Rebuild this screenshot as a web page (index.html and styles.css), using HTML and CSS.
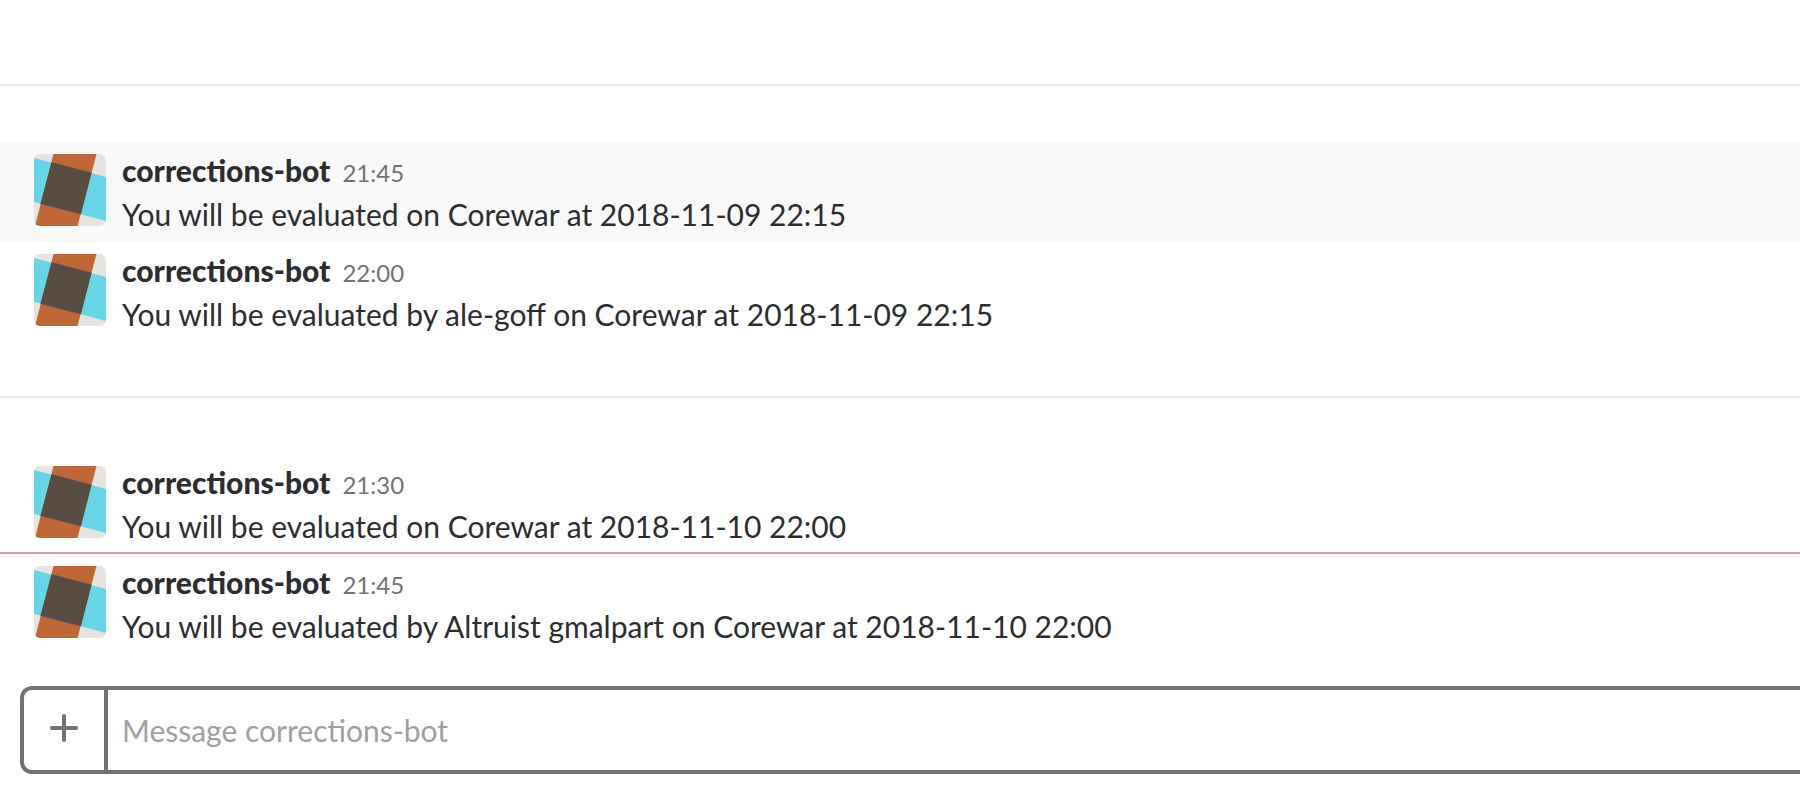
FILE: index.html
```html
<!DOCTYPE html>
<html lang="en">
<head>
<meta charset="utf-8">
<title>corrections-bot</title>
<link rel="stylesheet" href="styles.css">
</head>
<body>
<svg class="defs" aria-hidden="true">
  <symbol id="bot" viewBox="0 0 72 72">
    <rect width="72" height="72" fill="#e6e4e2"/>
    <path d="M0 4 72 23V67L0 48Z" fill="#66d5e5"/>
    <path d="M19.500 0H62.500L43.500 72H1Z" fill="#bf6736"/>
    <path d="M17.500 8.500 57.500 19 47 60 6.500 49.500Z" fill="#594d41"/>
    <path d="M17.500 8.500 57.500 19M6.500 49.500 47 60" stroke="#57466b" stroke-width=".7"/>
  </symbol>
</svg>
<main class="chat">
  <section class="day">
    <article class="message message-hover">
      <svg class="avatar" role="img" aria-label="corrections-bot"><use href="#bot"/></svg>
      <div class="content">
        <header class="meta"><strong class="name">corrections-bot</strong><time class="time">21:45</time></header>
        <p class="text">You will be evaluated on Corewar at 2018-11-09 22:15</p>
      </div>
    </article>
    <article class="message">
      <svg class="avatar" role="img" aria-label="corrections-bot"><use href="#bot"/></svg>
      <div class="content">
        <header class="meta"><strong class="name">corrections-bot</strong><time class="time">22:00</time></header>
        <p class="text">You will be evaluated by ale-goff on Corewar at 2018-11-09 22:15</p>
      </div>
    </article>
  </section>
  <section class="day day-last">
    <article class="message message-last-read">
      <svg class="avatar" role="img" aria-label="corrections-bot"><use href="#bot"/></svg>
      <div class="content">
        <header class="meta"><strong class="name">corrections-bot</strong><time class="time">21:30</time></header>
        <p class="text">You will be evaluated on Corewar at 2018-11-10 22:00</p>
      </div>
    </article>
    <article class="message">
      <svg class="avatar" role="img" aria-label="corrections-bot"><use href="#bot"/></svg>
      <div class="content">
        <header class="meta"><strong class="name">corrections-bot</strong><time class="time">21:45</time></header>
        <p class="text">You will be evaluated by Altruist gmalpart on Corewar at 2018-11-10 22:00</p>
      </div>
    </article>
  </section>
  <form class="composer">
    <button class="attach" type="button" aria-label="Attach"><svg class="plus" viewBox="0 0 28 28"><path d="M14 2V26M2 14H26"/></svg></button>
    <input class="field" type="text" placeholder="Message corrections-bot" aria-label="Message corrections-bot">
  </form>
</main>
</body>
</html>
```
FILE: styles.css
```css
* { box-sizing: border-box; }
body {
  margin: 0;
  background: #fff;
  color: #2c2d30;
  font-family: Lato, "Noto Sans", sans-serif;
  font-size: 30px;
  overflow-x: hidden;
}
.defs { position: absolute; width: 0; height: 0; }
.chat { padding-top: 84px; }
.day { border-top: 2px solid #e8e8e8; padding: 56px 0 54px; }
.day-last { padding-bottom: 32px; }
.message { display: flex; gap: 16px; padding: 12px 34px 6px; }
.message-hover { background: #f9f9f9; }
.message-last-read { border-bottom: 2px solid #e19ba2; padding-bottom: 4px; }
.avatar { width: 72px; height: 72px; border-radius: 6px; flex: none; }
.meta { display: flex; align-items: baseline; gap: 12px; height: 32px; line-height: 32px; }
.name { font-weight: 900; }
.time { color: #717274; font-size: 24px; }
.text { margin: 6px 0 0; line-height: 44px; }
.composer {
  display: flex;
  height: 88px;
  margin-left: 20px;
  border: 4px solid #717274;
  border-right: 0;
  border-radius: 12px 0 0 12px;
}
.attach {
  display: flex;
  align-items: center;
  justify-content: center;
  width: 84px;
  border: 0;
  border-right: 4px solid #717274;
  background: none;
  padding: 0 0 4px;
}
.plus { width: 28px; height: 28px; fill: none; stroke: #717274; stroke-width: 4; stroke-linecap: round; }
.field { flex: 1; border: 0; outline: 0; background: none; padding: 0 14px; font: inherit; color: inherit; }
.field::placeholder { color: #a0a0a2; opacity: 1; }
```
